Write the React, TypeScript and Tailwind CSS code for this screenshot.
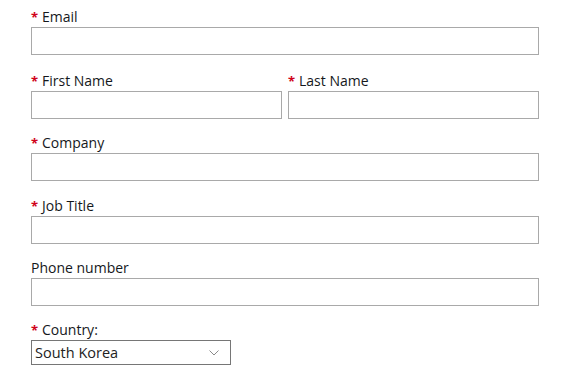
import React from "react";

const font = { fontFamily: "'Open Sans', Lato, sans-serif" };

function Label({ text, required }: { text: string; required?: boolean }) {
  return (
    <div className="h-[20px] pt-[2px] flex items-center text-[14px] leading-[18px] text-[#15181c] font-medium">
      {required && (
        <span className="text-[#d0021b] text-[13px] font-bold w-[11px] leading-[18px]">*</span>
      )}
      <span>{text}</span>
    </div>
  );
}

function Input() {
  return <div className="h-[28px] border border-[#a9a9a9] bg-white" />;
}

export default function App() {
  return (
    <div className="w-[573px] h-[381px] bg-white pl-[31px] pr-[34px] pt-[6px]" style={font}>
      <div className="flex flex-col gap-[15px]">
        <div>
          <Label text="Email" required />
          <div className="mt-[1px]">
            <Input />
          </div>
        </div>
        <div className="flex gap-[6px]">
          <div className="flex-1">
            <Label text="First Name" required />
            <div className="mt-[1px]">
              <Input />
            </div>
          </div>
          <div className="flex-1">
            <Label text="Last Name" required />
            <div className="mt-[1px]">
              <Input />
            </div>
          </div>
        </div>
        <div className="-mt-[2px]">
          <Label text="Company" required />
          <div className="mt-[1px]">
            <Input />
          </div>
        </div>
        <div className="-mt-[1px]">
          <Label text="Job Title" required />
          <div className="mt-[1px]">
            <Input />
          </div>
        </div>
        <div className="-mt-[2px]">
          <Label text="Phone number" />
          <div className="mt-[1px]">
            <Input />
          </div>
        </div>
        <div className="-mt-[2px]">
          <Label text="Country:" required />
          <div className="mt-[1px] w-[200px] h-[25px] border border-[#767676] flex items-center justify-between pl-[3px] pr-[11px] text-[14.5px] text-[#222]">
            <span>South Korea</span>
            <svg width="10" height="6" viewBox="0 0 10 6" fill="none">
              <path d="M0.5 0.5 L5 5 L9.5 0.5" stroke="#8a8a8a" strokeWidth="1" />
            </svg>
          </div>
        </div>
      </div>
    </div>
  );
}
